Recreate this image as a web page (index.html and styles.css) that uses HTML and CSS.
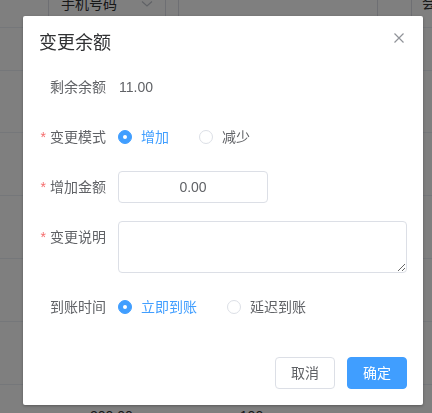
FILE: index.html
```html
<!DOCTYPE html>
<html lang="zh-CN">
<head>
<meta charset="utf-8">
<title>变更余额</title>
<link rel="stylesheet" href="styles.css">
</head>
<body>
<div class="page">
  <div class="toolbar">
    <div class="select">手机号码<span class="chev"><svg width="12" height="8" viewBox="0 0 12 8"><path d="M1 1.5 L6 6 L11 1.5" fill="none" stroke="#c0c4cc" stroke-width="1.2"/></svg></span></div>
    <div class="search"></div>
    <div class="more">会员</div>
  </div>
  <div class="row r1"></div>
  <div class="row r2"></div>
  <div class="row"></div>
  <div class="row"></div>
  <div class="row"></div>
  <div class="row"></div>
  <div class="row last"><span class="c1">200.00</span><span class="c2">100</span></div>
</div>
<div class="mask"></div>
<div class="dialog">
  <div class="header">
    <span class="title">变更余额</span>
    <span class="close"><svg width="10" height="10" viewBox="0 0 10 10"><path d="M0.5 0.5 L9.5 9.5 M9.5 0.5 L0.5 9.5" stroke="#909399" stroke-width="1.2"/></svg></span>
  </div>
  <div class="body">
    <div class="item">
      <label class="label">剩余余额</label>
      <div class="content num">11.00</div>
    </div>
    <div class="item">
      <label class="label"><span class="req">*</span>变更模式</label>
      <div class="content">
        <span class="radio checked"><span class="dot"></span><span class="rtext">增加</span></span>
        <span class="radio"><span class="dot"></span><span class="rtext">减少</span></span>
      </div>
    </div>
    <div class="item">
      <label class="label"><span class="req">*</span>增加金额</label>
      <div class="content"><input class="input" type="text" value="0.00"></div>
    </div>
    <div class="item tall">
      <label class="label"><span class="req">*</span>变更说明</label>
      <div class="content"><textarea class="textarea"></textarea></div>
    </div>
    <div class="item">
      <label class="label">到账时间</label>
      <div class="content">
        <span class="radio checked"><span class="dot"></span><span class="rtext">立即到账</span></span>
        <span class="radio"><span class="dot"></span><span class="rtext">延迟到账</span></span>
      </div>
    </div>
  </div>
  <div class="footer">
    <button class="btn">取消</button><button class="btn primary">确定</button>
  </div>
</div>
</body>
</html>
```
FILE: styles.css
```css
html, body {
  margin: 0;
  padding: 0;
  background: #fff;
  font-family: "Liberation Sans", "Noto Sans CJK SC", sans-serif;
  overflow: hidden;
}
.page {
  width: 432px;
  height: 413px;
  overflow: hidden;
}
.toolbar {
  height: 28px;
  border-bottom: 1px solid #ebeef5;
  box-sizing: border-box;
  display: flex;
  align-items: flex-start;
  position: relative;
}
.toolbar > div { flex-shrink: 0; }
.select {
  margin-left: 48px;
  margin-top: -12px;
  width: 118px;
  height: 32px;
  border: 1px solid #dcdfe6;
  box-sizing: border-box;
  font-size: 14px;
  color: #303133;
  padding-left: 12px;
  line-height: 30px;
  display: flex;
  justify-content: space-between;
}
.chev {
  padding-right: 12px;
  display: flex;
  align-items: center;
}
.search {
  margin-left: 12px;
  margin-top: -12px;
  width: 200px;
  height: 32px;
  border: 1px solid #dcdfe6;
  box-sizing: border-box;
}
.more {
  margin-left: 33px;
  margin-top: -12px;
  height: 32px;
  width: 60px;
  border-left: 1px solid #dcdfe6;
  padding-left: 10px;
  font-size: 14px;
  line-height: 30px;
  color: #303133;
}
.row {
  height: 63px;
  border-bottom: 1px solid #ebeef5;
  box-sizing: border-box;
}
.r1 { height: 43px; }
.r2 { height: 62px; }
.last {
  position: relative;
  font-size: 14px;
  color: #303133;
  display: flex;
  padding-top: 23px;
}
.c1 { margin-left: 90px; }
.c2 { margin-left: 107px; }
.mask {
  position: fixed;
  inset: 0;
  background: rgba(0, 0, 0, 0.5);
}
.dialog {
  position: absolute;
  left: 23px;
  top: 16px;
  width: 400px;
  background: #fff;
  border-radius: 2px;
  box-shadow: 0 1px 3px rgba(0, 0, 0, 0.3);
}
.header {
  position: relative;
  padding: 15px 16px 10px;
}
.title {
  display: block;
  font-size: 18px;
  line-height: 24px;
  color: #303133;
}
.close {
  position: absolute;
  top: 17px;
  right: 19px;
  width: 10px;
  height: 10px;
  display: flex;
}
.body {
  padding: 6px 16px 0;
}
.item {
  display: flex;
  height: 32px;
  margin-bottom: 18px;
}
.item.tall { height: 52px; }
.label {
  width: 79px;
  box-sizing: border-box;
  padding-right: 12px;
  text-align: right;
  font-size: 14px;
  line-height: 32px;
  color: #606266;
  flex-shrink: 0;
}
.req {
  color: #f56c6c;
  margin-right: 4px;
}
.content {
  flex: 1;
  display: flex;
  align-items: center;
  font-size: 14px;
  color: #606266;
}
.tall .content { align-items: flex-start; }
.num {
  line-height: 32px;
  padding-left: 1px;
}
.radio {
  display: inline-flex;
  align-items: center;
  margin-right: 30px;
  font-size: 14px;
  color: #606266;
}
.dot {
  width: 14px;
  height: 14px;
  box-sizing: border-box;
  border: 1px solid #dcdfe6;
  border-radius: 50%;
  background: #fff;
  position: relative;
}
.radio.checked .dot {
  border-color: #409eff;
  background: #409eff;
}
.radio.checked .dot::after {
  content: "";
  position: absolute;
  left: 4px;
  top: 4px;
  width: 4px;
  height: 4px;
  border-radius: 50%;
  background: #fff;
}
.rtext {
  padding-left: 9px;
  line-height: 20px;
}
.radio.checked .rtext { color: #409eff; }
.input {
  width: 150px;
  height: 32px;
  box-sizing: border-box;
  border: 1px solid #dcdfe6;
  border-radius: 4px;
  text-align: center;
  font-family: "Liberation Sans", "Noto Sans CJK SC", sans-serif;
  font-size: 14px;
  color: #606266;
  padding: 0 15px;
  outline: none;
  margin: 0;
}
.textarea {
  width: 289px;
  height: 52px;
  box-sizing: border-box;
  border: 1px solid #dcdfe6;
  border-radius: 4px;
  padding: 5px 15px;
  font-family: "Liberation Sans", "Noto Sans CJK SC", sans-serif;
  font-size: 14px;
  color: #606266;
  outline: none;
  margin: 0;
  display: block;
}
.footer {
  padding: 16px 16px 16px;
  display: flex;
  justify-content: flex-end;
  gap: 12px;
}
.btn {
  height: 32px;
  padding: 0 15px;
  border: 1px solid #dcdfe6;
  border-radius: 4px;
  background: #fff;
  color: #606266;
  font-family: "Liberation Sans", "Noto Sans CJK SC", sans-serif;
  font-size: 14px;
  line-height: 30px;
  margin: 0;
  cursor: pointer;
}
.btn.primary {
  background: #409eff;
  border-color: #409eff;
  color: #fff;
}
```
